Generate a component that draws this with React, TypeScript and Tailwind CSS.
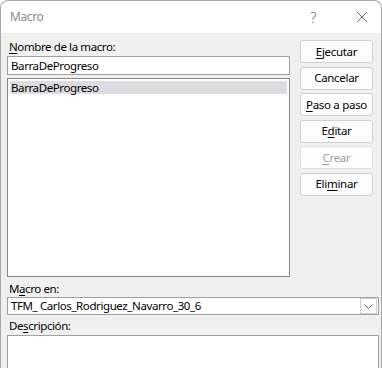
import React from "react";

const font = { fontFamily: '"Noto Sans", "Segoe UI", sans-serif' };

function Btn({ children, disabled }: { children: React.ReactNode; disabled?: boolean }) {
  return (
    <button
      className={
        "h-[23px] w-[73px] rounded-[3px] border bg-[#fdfdfd] text-[11.5px] tracking-[-0.3px] leading-none " +
        (disabled ? "border-[#e0e0e0] text-[#a0a0a0]" : "border-[#d0d0d0] text-black")
      }
    >
      {children}
    </button>
  );
}

export default function App() {
  return (
    <div
      className="w-[382px] h-[368px] overflow-hidden bg-white text-black text-[11.5px] tracking-[-0.4px]"
      style={font}
    >
      <div className="h-full rounded-tl-[8px] rounded-tr-[8px] border-l border-t border-r border-[#a8a8a8] bg-[#f0f0f0] flex flex-col">
        {/* title bar */}
        <div className="h-[32px] shrink-0 bg-white rounded-tl-[8px] rounded-tr-[8px] flex items-center pl-[9px]">
          <span className="text-[12px] text-[#8a8a8a]">Macro</span>
          <span className="ml-auto mr-[40px] text-[14px] text-[#6a6a6a] font-light">?</span>
          <svg width="12" height="12" viewBox="0 0 12 12" className="mr-[13px]">
            <path d="M1 1 L11 11 M11 1 L1 11" stroke="#6a6a6a" strokeWidth="1" />
          </svg>
        </div>

        <div className="flex-1 flex flex-col pl-[6px] pr-[2px] pt-[6px]">
          <div className="flex">
            <div className="w-[283px] flex flex-col">
              <div className="h-[15px] leading-[15px] pl-[2px]">
                <span className="underline underline-offset-2">N</span>ombre de la macro:
              </div>
              <div className="mt-[2px] h-[19px] border border-[#a0a0a0] bg-white pl-[3px] leading-[17px]">
                BarraDeProgreso
              </div>
              <div className="mt-[3px] h-[199px] border border-[#828790] bg-white p-[2px]">
                <div className="h-[13px] bg-[#dcdce2] pl-[1px] leading-[13px]">BarraDeProgreso</div>
              </div>
            </div>
            <div className="ml-[10px] flex flex-col gap-[3.5px] pt-[1px]">
              <Btn>
                <span className="underline underline-offset-2">E</span>jecutar
              </Btn>
              <Btn>Cancelar</Btn>
              <Btn>
                <span className="underline underline-offset-2">P</span>aso a paso
              </Btn>
              <Btn>
                E<span className="underline underline-offset-2">d</span>itar
              </Btn>
              <Btn disabled>
                <span className="underline underline-offset-2">C</span>rear
              </Btn>
              <Btn>
                Eli<span className="underline underline-offset-2">m</span>inar
              </Btn>
            </div>
          </div>

          <div className="mt-[4px] h-[15px] leading-[15px] pl-[2px]">
            M<span className="underline underline-offset-2">a</span>cro en:
          </div>
          <div className="mt-[1px] h-[18px] border border-[#a0a0a0] bg-white flex items-center pl-[3px]">
            <span className="flex-1">TFM_ Carlos_Rodriguez_Navarro_30_6</span>
            <div className="h-[16px] w-[17px] border border-[#d0d0d0] mr-[1px] flex items-center justify-center">
              <svg width="9" height="5" viewBox="0 0 9 5">
                <path d="M0.5 0.5 L4.5 4.5 L8.5 0.5" stroke="#606060" strokeWidth="1" fill="none" />
              </svg>
            </div>
          </div>
          <div className="mt-[3px] h-[15px] leading-[15px] pl-[2px]">
            De<span className="underline underline-offset-2">s</span>cripción:
          </div>
          <div className="mt-[2px] flex-1 border border-[#a0a0a0] border-b-0 bg-white" />
        </div>
      </div>
    </div>
  );
}
